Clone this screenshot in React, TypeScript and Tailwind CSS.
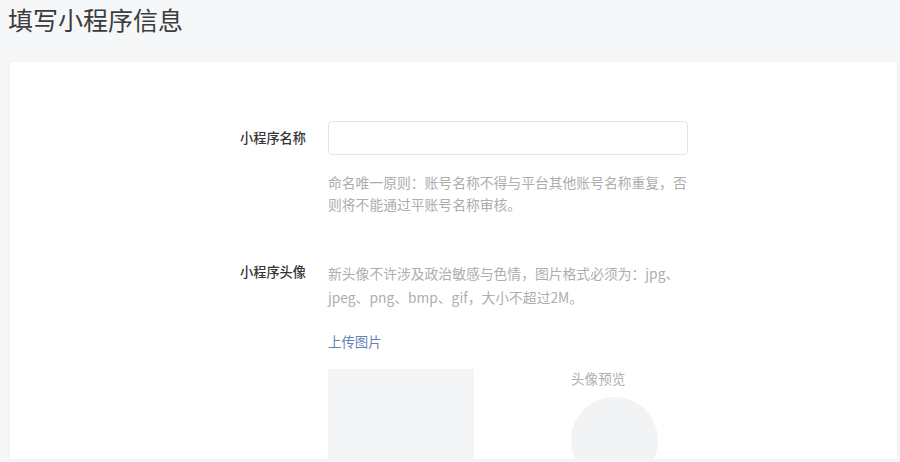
import React from "react";

const font = { fontFamily: '"Noto Sans CJK SC", "Noto Sans", sans-serif' };

export default function App() {
  return (
    <div className="w-[900px] h-[462px] bg-[#f6f7f9] overflow-hidden" style={font}>
      <div className="h-[62px] pl-[8px] pt-[4px]">
        <h1 className="text-[25px] leading-[30px] text-[#3c3c3c] font-normal">填写小程序信息</h1>
      </div>
      <div className="ml-[10px] mr-[3px] h-[397px] bg-white overflow-hidden shadow-[0_0_3px_rgba(0,0,0,0.04)]">
        <div className="ml-[226px] pt-[59px] flex flex-col">
          <div className="flex items-center">
            <div className="w-[70px] text-right text-[13.2px] font-medium text-[#353535]">小程序名称</div>
            <div className="ml-[22px] w-[360px] h-[34px] rounded-[4px] border border-[#e3e3e3] bg-white" />
          </div>
          <div className="ml-[92px] mt-[16px] w-[360px] text-[13.8px] leading-[22px] text-[#adadad]">
            命名唯一原则：账号名称不得与平台其他账号名称重复，否则将不能通过平账号名称审核。
          </div>
          <div className="flex mt-[46px]">
            <div className="w-[70px] text-right text-[13.2px] leading-[22px] font-medium text-[#353535]">小程序头像</div>
            <div className="ml-[22px] w-[360px] flex flex-col">
              <div className="text-[13.8px] leading-[24px] text-[#adadad]">
                新头像不许涉及政治敏感与色情，图片格式必须为：jpg、jpeg、png、bmp、gif，大小不超过2M。
              </div>
              <div className="mt-[21px] text-[13.4px] leading-[22px] text-[#6482b8]">上传图片</div>
              <div className="mt-[17px] flex">
                <div className="w-[146px] h-[146px] bg-[#f3f4f6]" />
                <div className="ml-[97px] flex flex-col">
                  <div className="text-[13.6px] leading-[18px] text-[#b0b0b0]">头像预览</div>
                  <div className="mt-[10px] w-[87px] h-[87px] rounded-full bg-[#f2f3f5]" />
                </div>
              </div>
            </div>
          </div>
        </div>
      </div>
    </div>
  );
}
